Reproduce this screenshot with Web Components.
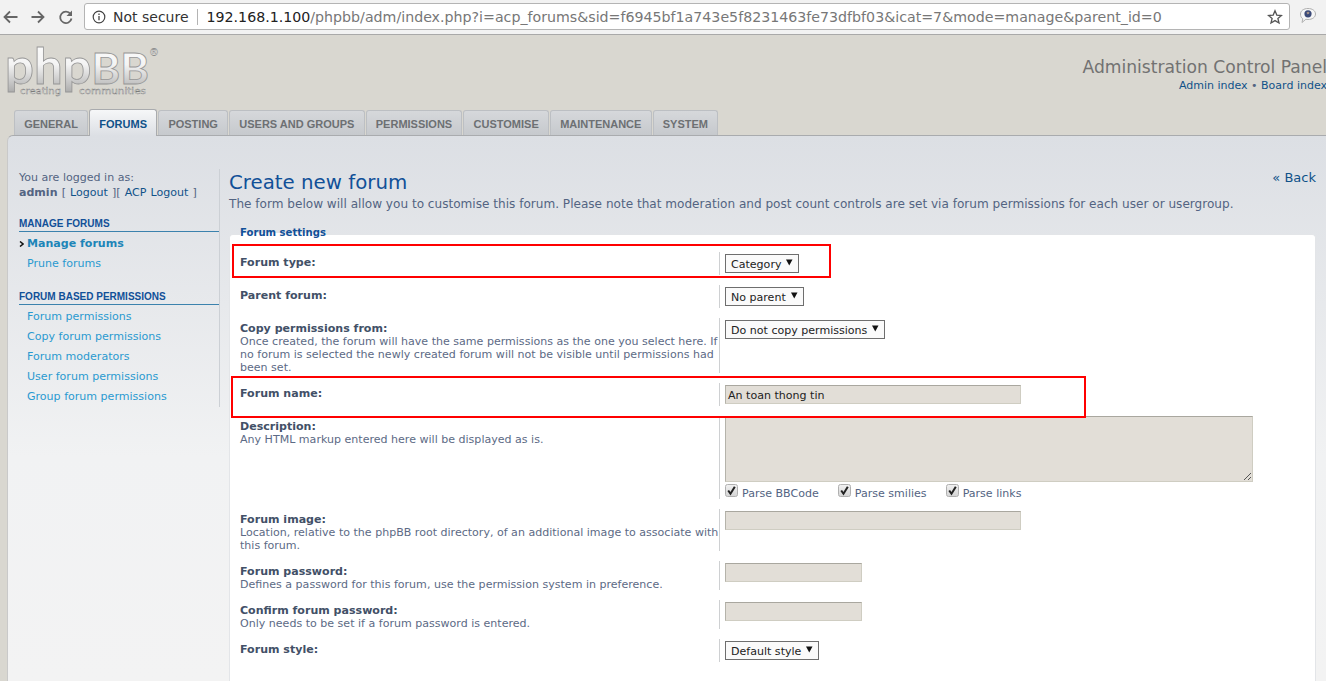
<!DOCTYPE html>
<html>
<head>
<meta charset="utf-8">
<title>Administration Control Panel</title>
<style>
  html, body { margin: 0; height: 681px; overflow: hidden; background: #d9d7d0; }
  body { font-family: "DejaVu Sans", sans-serif; font-size: 11px; }
</style>
</head>
<body>
<browser-bar></browser-bar>
<acp-header></acp-header>
<acp-tabs>
  <acp-tab>GENERAL</acp-tab>
  <acp-tab active>FORUMS</acp-tab>
  <acp-tab>POSTING</acp-tab>
  <acp-tab>USERS AND GROUPS</acp-tab>
  <acp-tab>PERMISSIONS</acp-tab>
  <acp-tab>CUSTOMISE</acp-tab>
  <acp-tab>MAINTENANCE</acp-tab>
  <acp-tab>SYSTEM</acp-tab>
</acp-tabs>
<acp-panel>
  <acp-sidebar slot="side">
    <side-group title="MANAGE FORUMS">
      <side-link active>Manage forums</side-link>
      <side-link>Prune forums</side-link>
    </side-group>
    <side-group title="FORUM BASED PERMISSIONS">
      <side-link>Forum permissions</side-link>
      <side-link>Copy forum permissions</side-link>
      <side-link>Forum moderators</side-link>
      <side-link>User forum permissions</side-link>
      <side-link>Group forum permissions</side-link>
    </side-group>
  </acp-sidebar>
  <acp-page-head>
    <span slot="title">Create new forum</span>
    The form below will allow you to customise this forum. Please note that moderation and post count controls are set via forum permissions for each user or usergroup.
  </acp-page-head>
  <acp-fieldset legend="Forum settings">
    <form-row label="Forum type:" style="--h:23px">
      <acp-select>Category</acp-select>
    </form-row>
    <form-row label="Parent forum:" style="--h:23px">
      <acp-select>No parent</acp-select>
    </form-row>
    <form-row label="Copy permissions from:" style="--h:55px">
      <span slot="hint">Once created, the forum will have the same permissions as the one you select here. If no forum is selected the newly created forum will not be visible until permissions had been set.</span>
      <acp-select>Do not copy permissions</acp-select>
    </form-row>
    <form-row label="Forum name:" style="--h:23px">
      <acp-input style="--w:296px">An toan thong tin</acp-input>
    </form-row>
    <form-row label="Description:" style="--h:83px">
      <span slot="hint">Any HTML markup entered here will be displayed as is.</span>
      <acp-input style="--w:528px;--field-h:66px;--field-top:0" multiline></acp-input>
      <check-row>
        <acp-check>Parse BBCode</acp-check>
        <acp-check>Parse smilies</acp-check>
        <acp-check>Parse links</acp-check>
      </check-row>
    </form-row>
    <form-row label="Forum image:" style="--h:42px">
      <span slot="hint">Location, relative to the phpBB root directory, of an additional image to associate with this forum.</span>
      <acp-input style="--w:296px"></acp-input>
    </form-row>
    <form-row label="Forum password:" style="--h:29px">
      <span slot="hint">Defines a password for this forum, use the permission system in preference.</span>
      <acp-input style="--w:137px"></acp-input>
    </form-row>
    <form-row label="Confirm forum password:" style="--h:29px">
      <span slot="hint">Only needs to be set if a forum password is entered.</span>
      <acp-input style="--w:137px"></acp-input>
    </form-row>
    <form-row label="Forum style:" style="--h:23px">
      <acp-select>Default style</acp-select>
    </form-row>
  </acp-fieldset>
</acp-panel>

<script>
// small helper, every element just stamps its html into an open shadow root
class Base extends HTMLElement {
  connectedCallback() {
    if (this.shadowRoot) return;
    this.attachShadow({ mode: 'open' });
    this.shadowRoot.innerHTML = this.render();
  }
}

class BrowserBar extends Base {
  render() {
    return `
      <style>
        :host { display: flex; align-items: flex-start; height: 34px; background: #f2f2f2; border-bottom: 1px solid #a9a9a9; font-family: "DejaVu Sans", sans-serif; }
        .nav { display: flex; align-items: center; width: 84px; height: 33px; flex: none; padding-left: 1px; box-sizing: border-box; gap: 10px; }
        .nav svg { display: block; flex: none; }
        .omni { flex: none; box-sizing: border-box; width: 1206px; height: 27px; margin-top: 3px; background: #fff; border: 1px solid #b4b4b4; border-radius: 3px; display: flex; align-items: center; white-space: nowrap; overflow: hidden; font-size: 14px; }
        .omni .info { margin-left: 7px; margin-right: 7px; flex: none; }
        .sec { color: #333; font-size: 14px; }
        .sep { width: 1px; height: 16px; background: #b4b4b4; margin: 0 9px 0 8px; flex: none; }
        .host { color: #222; }
        .rest { color: #777; }
        .url { flex: 1; font-size: 14.2px; overflow: hidden; }
        .star { flex: none; margin-right: 6px; }
        .ext { flex: none; margin: 7px 0 0 9px; }
      </style>
      <div class="nav">
        <svg width="18" height="18" viewBox="0 0 18 18"><path d="M16.5 9H4M9 3.500 3.500 9 9 14.500" fill="none" stroke="#666" stroke-width="1.800"/></svg>
        <svg width="18" height="18" viewBox="0 0 18 18"><path d="M2.500 9H14M9 3.500 14.500 9 9 14.500" fill="none" stroke="#666" stroke-width="1.800"/></svg>
        <svg width="18" height="18" viewBox="0 0 18 18"><path d="M13.500 6A5.700 5.700 0 1 0 14.500 10.500" fill="none" stroke="#666" stroke-width="1.800"/><path d="M15 2.500V8H9.500z" fill="#666"/></svg>
      </div>
      <div class="omni">
        <svg class="info" width="14" height="14" viewBox="0 0 14 14"><circle cx="7" cy="7" r="5.800" fill="none" stroke="#444" stroke-width="1.200"/><path d="M7 6v4.200M7 3.600v1.300" stroke="#444" stroke-width="1.300"/></svg>
        <span class="sec">Not secure</span><span class="sep"></span>
        <span class="url"><span class="host">192.168.1.100</span><span class="rest">/phpbb/adm/index.php?i=acp_forums&amp;sid=f6945bf1a743e5f8231463fe73dfbf03&amp;icat=7&amp;mode=manage&amp;parent_id=0</span></span>
        <svg class="star" width="16" height="16" viewBox="0 0 16 16"><path d="M8 1.800 9.800 6.100l4.600.4-3.500 3 1.100 4.500L8 11.600 4 14l1.100-4.500-3.500-3 4.600-.4z" fill="none" stroke="#555" stroke-width="1.300"/></svg>
      </div>
      <svg class="ext" width="18" height="18" viewBox="0 0 18 18"><path d="M9 1.500c4.400 0 7.500 2.300 7.500 5.500s-3.100 5.500-7.500 5.500c-.8 0-1.500-.1-2.200-.2L3 15.500l.8-3.700C2 10.800 1.500 9 1.500 7c0-3.200 3.100-5.500 7.500-5.500z" fill="#f6f6f6" stroke="#b0b0b0"/><circle cx="9" cy="6.800" r="3.600" fill="#3b4a78"/><path d="M7.500 5.500c1-1.200 2.500-1 3 0l-.6 1.500-1.700.3z" fill="#a08f86"/></svg>
    `;
  }
}

class AcpHeader extends Base {
  render() {
    return `
      <style>
        :host { display: flex; justify-content: space-between; height: 75px; font-family: "DejaVu Sans", sans-serif; overflow: hidden; }
        svg { display: block; flex: none; }
        .right { text-align: right; padding-top: 21px; white-space: nowrap; }
        .ttl { font-size: 17.15px; line-height: 22px; color: #727272; margin-right: -1px; }
        .links { font-size: 11px; line-height: 15px; color: #536482; margin-right: -1px; }
        .links a { color: #105289; }
      </style>
      <svg width="170" height="75" viewBox="0 0 170 75">
        <defs><linearGradient id="lg" x1="0" y1="0" x2="0" y2="1"><stop offset="0" stop-color="#ffffff"/><stop offset=".5" stop-color="#f4f4f4"/><stop offset="1" stop-color="#a9a9a9"/></linearGradient></defs>
        <text x="5" y="48.500" font-family="Lato" font-weight="bold" font-size="49" textLength="144" lengthAdjust="spacingAndGlyphs" fill="url(#lg)" stroke="#969696" stroke-width=".8">php<tspan font-size="42">BB</tspan></text>
        <text x="149" y="21" font-family="DejaVu Sans" font-size="10" fill="#f2f2f2" stroke="#8f8f8f" stroke-width=".35">®</text>
        <text x="20" y="59" font-family="DejaVu Sans" font-size="9" textLength="41" lengthAdjust="spacingAndGlyphs" fill="#fff" stroke="#7a7a7a" stroke-width=".4">creating</text>
        <text x="79" y="59" font-family="DejaVu Sans" font-size="9" textLength="67" lengthAdjust="spacingAndGlyphs" fill="#fff" stroke="#7a7a7a" stroke-width=".4">communities</text>
      </svg>
      <div class="right">
        <div class="ttl">Administration Control Panel</div>
        <div class="links"><a>Admin index</a> • <a>Board index</a></div>
      </div>
    `;
  }
}

class AcpTabs extends Base {
  render() {
    return `
      <style>
        :host { display: flex; gap: 1px; height: 25px; padding-left: 14px; position: relative; z-index: 1; }
      </style>
      <slot></slot>
    `;
  }
}

class AcpTab extends Base {
  render() {
    return `
      <style>
        :host { display: block; box-sizing: border-box; height: 25px; padding: 0 9.2px; font: bold 11px/27px "Liberation Sans", Arial, sans-serif; color: #6d7073; background: linear-gradient(#d6d8db, #c6c9cd); border: 1px solid #bcbfc3; border-bottom: 0; border-radius: 3px 3px 0 0; white-space: nowrap; }
        :host([active]) { height: 27px; margin-top: -1px; color: #105289; background: linear-gradient(#f6f7f8, #dcdfe4); border-color: #a9abae; line-height: 29px; }
      </style>
      <slot></slot>
    `;
  }
}

class AcpPanel extends Base {
  render() {
    return `
      <style>
        :host { display: flex; box-sizing: border-box; margin-left: 7px; height: 546px; padding: 33px 10px 0 11px; gap: 9px; border-top: 1px solid #a9abae; border-left: 1px solid #c9c9c9; border-top-left-radius: 6px; background: linear-gradient(#dcdfe4, #f1f2f3 320px, #f3f3f3); font-family: "DejaVu Sans", sans-serif; font-size: 11.05px; color: #536482; }
        .side { flex: none; width: 201px; }
        .main { flex: 1; min-width: 0; }
      </style>
      <div class="side"><slot name="side"></slot></div>
      <div class="main"><slot></slot></div>
    `;
  }
}

class AcpSidebar extends Base {
  render() {
    return `
      <style>
        :host { display: block; box-sizing: border-box; width: 201px; height: 238px; padding-top: 1px; border-right: 1px solid #ccd0d5; }
        .who { line-height: 15px; white-space: nowrap; margin-bottom: 16px; }
        .who a { color: #105289; }
        .line { word-spacing: .6px; }
      </style>
      <div class="who">You are logged in as:<br><span class="line"><b>admin</b> [ <a>Logout</a> ][ <a>ACP Logout</a> ]</span></div>
      <slot></slot>
    `;
  }
}

class SideGroup extends Base {
  render() {
    return `
      <style>
        :host { display: block; margin-bottom: 15px; }
        h3 { margin: 0 0 2px; height: 15px; font: bold 10px/15px "Liberation Sans", Arial, sans-serif; color: #115098; border-bottom: 1px solid #3b82ad; }
      </style>
      <h3>${this.getAttribute('title')}</h3>
      <slot></slot>
    `;
  }
}

class SideLink extends Base {
  render() {
    return `
      <style>
        :host { display: block; height: 20px; line-height: 20px; padding-left: 8px; color: #2a9ad0; white-space: nowrap; position: relative; }
        :host([active]) { font-weight: bold; color: #1d85b8; }
        svg { position: absolute; left: 0; top: 7px; }
      </style>
      ${this.hasAttribute('active') ? '<svg width="5" height="6" viewBox="0 0 5 6"><path d="M1 .5 4 3 1 5.500" fill="none" stroke="#111" stroke-width="1.500"/></svg>' : ''}
      <slot></slot>
    `;
  }
}

class AcpPageHead extends Base {
  render() {
    return `
      <style>
        :host { display: block; }
        .back { float: right; font-size: 13px; line-height: 17px; color: #105289; }
        h1 { margin: 0; padding-top: 1px; font: normal 19.8px/25px "DejaVu Sans", sans-serif; color: #115098; }
        p { margin: 2px 0 0; line-height: 15px; font-size: 12.08px; white-space: nowrap; }
      </style>
      <a class="back">« Back</a>
      <h1><slot name="title"></slot></h1>
      <p><slot></slot></p>
    `;
  }
}

class AcpFieldset extends Base {
  render() {
    return `
      <style>
        :host { display: block; position: relative; margin: 22px 0 0; background: #fff; border: 1px solid #e3e5e8; border-bottom: 0; border-radius: 4px 4px 0 0; min-height: 500px; padding: 0 0 0 10px; }
        .legend { font: bold 10.1px/14px "DejaVu Sans", sans-serif; color: #115098; margin-top: -9px; margin-bottom: 12px; width: max-content; background: linear-gradient(transparent 50%, #fff 50%); }
        .mark { position: absolute; border: 2px solid #f00; box-sizing: border-box; pointer-events: none; }
      </style>
      <div class="legend">${this.getAttribute('legend')}</div>
      <slot></slot>
      <div class="mark" style="left:2px;top:9px;width:599px;height:34px"></div>
      <div class="mark" style="left:1px;top:141px;width:855px;height:42px"></div>
    `;
  }
}

class FormRow extends Base {
  render() {
    return `
      <style>
        :host { display: flex; height: var(--h); margin-bottom: 10px; }
        .dt { flex: none; box-sizing: border-box; width: 479px; padding-top: 4px; line-height: 13px; color: #5c6a85; }
        label { display: block; font-weight: bold; color: #425067; }
        .dd { flex: none; border-left: 1px solid #ced0d2; padding-left: 5px; }
      </style>
      <div class="dt"><label>${this.getAttribute('label')}</label><slot name="hint"></slot></div>
      <div class="dd"><slot></slot></div>
    `;
  }
}

class AcpSelect extends Base {
  render() {
    return `
      <style>
        :host { display: inline-flex; box-sizing: border-box; height: 19px; margin-top: 2px; padding: 2px 5px 0; gap: 5px; align-items: center; background: #fafafa; border: 1px solid #6e6e6e; color: #222; white-space: nowrap; }
        svg { margin-top: -4px; flex: none; }
      </style>
      <slot></slot>
      <svg width="7" height="7" viewBox="0 0 7 7"><path d="M0 .5h6.500L3.250 6.500z" fill="#111"/></svg>
    `;
  }
}

class AcpInput extends Base {
  render() {
    const multi = this.hasAttribute('multiline');
    return `
      <style>
        :host { display: block; position: relative; box-sizing: border-box; width: var(--w); height: var(--field-h, 19px); margin-top: var(--field-top, 2px); padding: 0 3px 0 2px; background: #e2ded7; border: 1px solid #cfcdc2; border-top-color: #a9a79f; border-left-color: #b5b3aa; line-height: 19px; color: #222; white-space: nowrap; }
        svg { position: absolute; right: 0; bottom: 0; }
      </style>
      <slot></slot>
      ${multi ? '<svg width="9" height="9" viewBox="0 0 9 9"><path d="M8 1 1 8M8 5 5 8" stroke="#555" stroke-width="1"/></svg>' : ''}
    `;
  }
}

class CheckRow extends Base {
  render() {
    return `
      <style>
        :host { display: flex; gap: 19px; margin-top: 2px; height: 15px; }
      </style>
      <slot></slot>
    `;
  }
}

class AcpCheck extends Base {
  render() {
    return `
      <style>
        :host { display: inline-flex; align-items: flex-start; gap: 4px; line-height: 15px; color: #536482; white-space: nowrap; }
        svg { flex: none; display: block; }
        span { padding-top: 2px; }
      </style>
      <svg width="13" height="13" viewBox="0 0 13 13"><defs><linearGradient id="cb" x1="0" y1="0" x2="0" y2="1"><stop offset="0" stop-color="#f2f2f2"/><stop offset="1" stop-color="#d4d4d4"/></linearGradient></defs><rect x=".5" y=".5" width="12" height="12" rx="2" fill="url(#cb)" stroke="#b0b0b0"/><path d="M3.200 6.500 5.500 9.800 9.800 2.800" fill="none" stroke="#222" stroke-width="2"/></svg>
      <span><slot></slot></span>
    `;
  }
}

customElements.define('browser-bar', BrowserBar);
customElements.define('acp-header', AcpHeader);
customElements.define('acp-tabs', AcpTabs);
customElements.define('acp-tab', AcpTab);
customElements.define('acp-panel', AcpPanel);
customElements.define('acp-sidebar', AcpSidebar);
customElements.define('side-group', SideGroup);
customElements.define('side-link', SideLink);
customElements.define('acp-page-head', AcpPageHead);
customElements.define('acp-fieldset', AcpFieldset);
customElements.define('form-row', FormRow);
customElements.define('acp-select', AcpSelect);
customElements.define('acp-input', AcpInput);
customElements.define('check-row', CheckRow);
customElements.define('acp-check', AcpCheck);
</script>
</body>
</html>
